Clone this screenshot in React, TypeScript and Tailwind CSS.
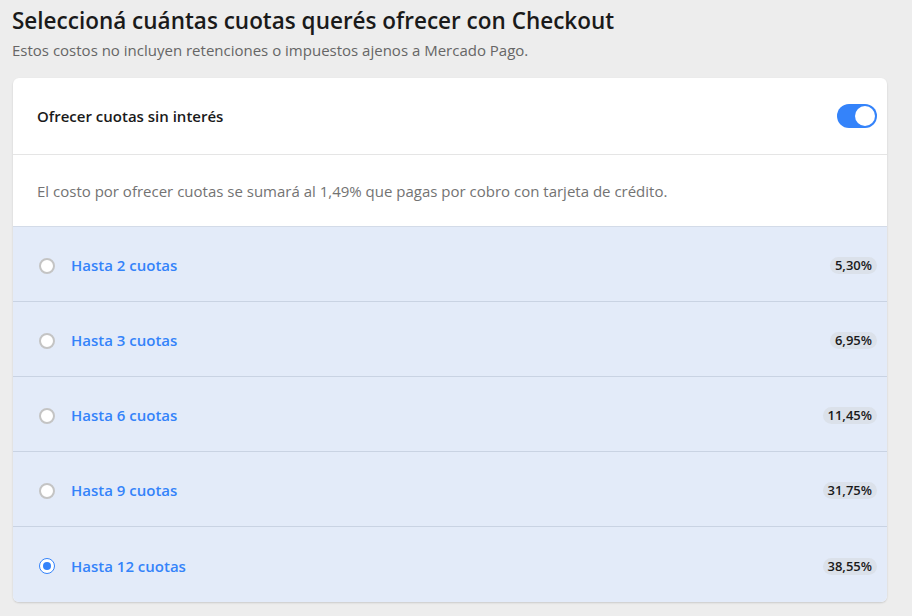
import React from "react";

const rows = [
  { label: "Hasta 2 cuotas", pct: "5,30%", checked: false },
  { label: "Hasta 3 cuotas", pct: "6,95%", checked: false },
  { label: "Hasta 6 cuotas", pct: "11,45%", checked: false },
  { label: "Hasta 9 cuotas", pct: "31,75%", checked: false },
  { label: "Hasta 12 cuotas", pct: "38,55%", checked: true },
];

export default function App() {
  return (
    <div
      className="w-[912px] h-[616px] bg-[#ededed] overflow-hidden pl-[13px] pr-[25px] pt-[6px]"
      style={{ fontFamily: "'Open Sans', 'Noto Sans', sans-serif" }}
    >
      <h1 className="text-[22.5px] leading-[30px] font-semibold text-[#1a1a1a] -ml-px">
        Seleccioná cuántas cuotas querés ofrecer con Checkout
      </h1>
      <p className="text-[15px] leading-[20px] text-[#666] mt-[4px] -ml-px">
        Estos costos no incluyen retenciones o impuestos ajenos a Mercado Pago.
      </p>
      <div className="mt-[18px] bg-white rounded-[6px] shadow-[0_1px_2px_rgba(0,0,0,0.15)] overflow-hidden">
        <div className="h-[77px] flex items-center justify-between pl-[24px] pr-[10px] border-b border-[#e5e5e5]">
          <span className="text-[15px] font-semibold text-[#1a1a1a]">Ofrecer cuotas sin interés</span>
          <div className="w-[40px] h-[24px] rounded-full bg-[#3483fa] relative">
            <div className="absolute right-[2px] top-[2px] w-[20px] h-[20px] rounded-full bg-white" />
          </div>
        </div>
        <div className="h-[72px] flex items-center pl-[24px] pt-[2px] border-b border-[#d3dbe8]">
          <span className="text-[15px] text-[#737373]">
            El costo por ofrecer cuotas se sumará al 1,49% que pagas por cobro con tarjeta de crédito.
          </span>
        </div>
        {rows.map((r, i) => (
          <div
            key={r.label}
            className={`h-[75px] flex items-center bg-[#e3ebf9] pl-[26px] pr-[10px] pt-[3px] ${i < rows.length - 1 ? "border-b border-[#c9d3e3]" : ""}`}
          >
            {r.checked ? (
              <span className="w-[16px] h-[16px] rounded-full border-[1.5px] border-[#3483fa] bg-white flex items-center justify-center">
                <span className="w-[8px] h-[8px] rounded-full bg-[#3483fa]" />
              </span>
            ) : (
              <span className="w-[16px] h-[16px] rounded-full border-2 border-[#c4c4c4] bg-white" />
            )}
            <span className="ml-[16px] text-[15px] font-semibold text-[#3483fa]">{r.label}</span>
            <span className="ml-auto px-[5px] h-[17px] leading-[17px] rounded-full bg-[#dbe1ea] text-[13px] font-semibold text-[#1a1a1a]">
              {r.pct}
            </span>
          </div>
        ))}
      </div>
    </div>
  );
}
